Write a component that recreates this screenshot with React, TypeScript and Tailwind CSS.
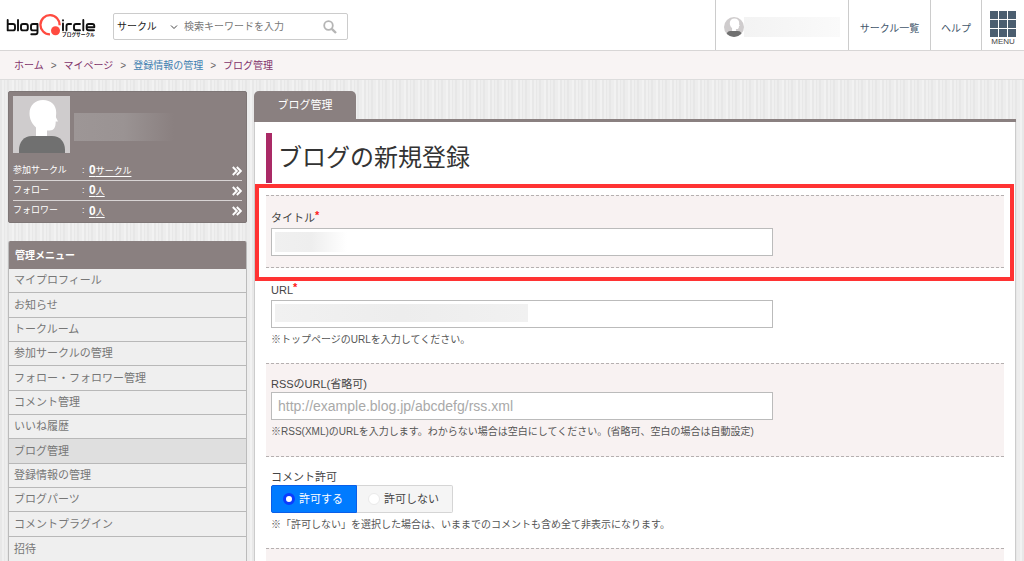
import React from "react";

const crumbs = [
  { label: "ホーム", visited: true },
  { label: "マイページ", visited: true },
  { label: "登録情報の管理", visited: false },
  { label: "ブログ管理", visited: true },
];

const stats = [
  { label: "参加サークル", unit: "サークル" },
  { label: "フォロー", unit: "人" },
  { label: "フォロワー", unit: "人" },
];

const menu = [
  "マイプロフィール",
  "お知らせ",
  "トークルーム",
  "参加サークルの管理",
  "フォロー・フォロワー管理",
  "コメント管理",
  "いいね履歴",
  "ブログ管理",
  "登録情報の管理",
  "ブログパーツ",
  "コメントプラグイン",
  "招待",
];

const stripes =
  "bg-[#eeeeee] bg-[repeating-linear-gradient(90deg,#e8e8e8_0px,#e8e8e8_2px,#f0f0f0_2px,#f0f0f0_4px,#e8e8e8_4px,#e8e8e8_5px,#eeeeee_5px,#eeeeee_7px,#e7e7e7_7px,#e7e7e7_9px,#ededed_9px,#ededed_12px,#f2f2f2_12px,#f2f2f2_14px)]";

function Logo() {
  return (
    <svg viewBox="0 0 90 24" className="h-6 w-[90px]" role="img" aria-label="blogCircle">
      <g fill="none" stroke="#111" strokeWidth="1.9" strokeLinecap="round" strokeLinejoin="round">
        <path d="M1.700 6v10.400h5.300q2 0 2-2V12q0-2-2-2H2" />
        <path d="M12 6v10.400" />
        <rect x="15" y="10" width="6.800" height="6.400" rx="2" />
        <path d="M31.500 16.400h-4.500q-2 0-2-2V12q0-2 2-2h4.500v8.200q0 2-2 2h-4.200" />
        <path d="M57 9.500v6.700M60.500 16.200V12q0-2 2-2h2.600M74 10h-4q-2 0-2 2v2.200q0 2 2 2h4M77.300 6v10.200M88 16.200h-5.300q-2 0-2-2V12q0-2 2-2h3.600q2 0 2 2v1.200h-7.200" />
        <path d="M57 6.300v.3" />
      </g>
      <path d="M44 20.400A9.600 9.600 0 1 1 53.600 11.200" fill="none" stroke="#ff4b40" strokeWidth="2.300" />
      <circle cx="49.500" cy="16.800" r="4.500" fill="#ff4b40" />
      <text x="56" y="21.800" fontSize="4.700" fontWeight="700" fill="#111">ブログサークル</text>
    </svg>
  );
}

function Silhouette({ className }: { className: string }) {
  return (
    <svg viewBox="0 0 57 57" className={className} aria-hidden="true">
      <rect width="57" height="57" fill="#cfcccd" />
      <path d="M23 42V31.500C19 28 16.500 23 16.500 17.500 16.500 9.500 22 4 30 4s13.200 5 13.200 12.500c0 2.500-.4 4-.2 5l2 4h-2.300c0 6-1.700 9-6.200 9H34V42z" fill="#fff" />
      <path d="M6 57v-3c0-8 5-14 13-14h20c8 0 13 6 13 14v3z" fill="#707070" />
    </svg>
  );
}

function Chevrons() {
  return (
    <svg viewBox="0 0 10 10" className="h-[10px] w-[10px]" fill="none" stroke="#fff" strokeWidth="1.900" aria-hidden="true">
      <path d="M.8 1l4 4-4 4M4.800 1l4 4-4 4" />
    </svg>
  );
}

function Required() {
  return <span className="align-top text-[11px] font-bold leading-[11px] text-[#ff1a1a]">*</span>;
}

const field = "block h-7 w-[502px] max-w-full border border-[#bbb] bg-white px-[6px] text-[14px] text-[#444] outline-none placeholder:text-[#a9a9a9]";
const note = "mt-1 text-[10px] leading-4 text-[#555]";
const label = "block text-[11px] leading-4";

export default function App() {
  return (
    <div lang="ja" className={`flex min-h-screen flex-col font-['Liberation_Sans','Noto_Sans_CJK_JP',sans-serif] text-[#444] ${stripes}`}>
      <header className="flex h-[51px] items-stretch border-b border-[#d8d6d6] bg-white">
        <a href="#home" className="ml-[6px] mt-[14px] block h-6">
          <Logo />
        </a>
        <form className="ml-[17px] mt-[13px] flex h-[27px] w-[235px] items-center rounded-[2px] border border-[#ccc]" onSubmit={(e) => e.preventDefault()}>
          <div className="relative flex items-center">
            <select aria-label="検索対象" className="h-6 w-[68px] appearance-none bg-transparent pl-[3px] text-[10px] text-[#222] outline-none">
              <option>サークル</option>
            </select>
            <svg viewBox="0 0 8 8" className="pointer-events-none absolute right-1 h-2 w-2" fill="none" stroke="#444" aria-hidden="true">
              <path d="M1 2.500l3 3 3-3" />
            </svg>
          </div>
          <input aria-label="検索キーワード" placeholder="検索キーワードを入力" className="h-6 min-w-0 flex-1 bg-transparent pl-[2px] text-[10px] outline-none placeholder:text-[#777]" />
          <button aria-label="検索" className="mr-[10px]">
            <svg viewBox="0 0 14 14" className="h-[14px] w-[14px]" fill="none" stroke="#b5b5b5" aria-hidden="true">
              <circle cx="5.500" cy="5.500" r="4.300" strokeWidth="1.800" />
              <path d="M8.800 8.800L13 13" strokeWidth="2.400" />
            </svg>
          </button>
        </form>
        <nav className="ml-auto flex text-[10px] text-[#42566b]">
          <a href="#me" className="flex w-[133px] items-center border-l border-[#ccc] pl-2 pt-1" aria-label="マイページ">
            <Silhouette className="h-5 w-5 rounded-full" />
            <span className="h-5 w-24 bg-linear-to-r from-[#f3f3f3] to-[#fafafa]" />
          </a>
          <a href="#circles" className="flex w-[82px] items-center justify-center border-l border-[#ccc] pt-[6px]">サークル一覧</a>
          <a href="#help" className="flex w-[51px] items-center justify-center border-l border-[#ccc] pt-[6px]">ヘルプ</a>
          <button className="flex w-[43px] flex-col items-center border-l border-[#ccc] pt-[11px]">
            <span className="grid grid-cols-3 gap-px">
              {Array.from({ length: 9 }, (_, i) => (
                <span key={i} className="h-2 w-2 bg-[#4b5e70]" />
              ))}
            </span>
            <span className="text-[8px] leading-[10px] text-[#444]">MENU</span>
          </button>
        </nav>
      </header>

      <nav aria-label="パンくず" className="flex h-[29px] items-center border-b border-[#ddd] bg-[#f8f4f4] pl-[14px] text-[10px]">
        {crumbs.map((c, i) => (
          <React.Fragment key={c.label}>
            {i > 0 && <span className="px-[7px] text-[#666]">&gt;</span>}
            <a href="#crumb" className={c.visited ? "text-[#82336b]" : "text-[#3f7fb0]"}>{c.label}</a>
          </React.Fragment>
        ))}
      </nav>

      <div className="flex flex-1 gap-[7px] px-2 pt-[11px]">
        <aside className="w-[239px] shrink-0">
          <section className="rounded-[2px] border border-[#7e7676] bg-[#8a8080] px-1 pb-px pt-1 text-white">
            <div className="flex h-[65px] items-start">
              <Silhouette className="h-[57px] w-[57px]" />
              <span className="ml-1 mt-[17px] h-7 w-[100px] bg-linear-to-r from-[#9d9696] via-[#9a9393] to-[#8a8080]" />
            </div>
            <ul>
              {stats.map((s) => (
                <li key={s.label} className="flex h-5 items-center border-b border-[#d8d4d4] text-[9px] last:border-b-0">
                  <span className="w-[69px]">{s.label}</span>
                  <span className="w-[7px]">:</span>
                  <a href="#stat" className="flex-1 leading-4 underline underline-offset-2">
                    <span className="text-[12px] font-bold">0</span>{s.unit}
                  </a>
                  <Chevrons />
                </li>
              ))}
            </ul>
          </section>
          <nav aria-label="管理メニュー" className="mt-[18px] overflow-hidden rounded-t-[2px] border-x border-[#bbb]">
            <h2 className="flex h-7 items-center bg-[#8a8080] pl-[6px] text-[10px] font-bold text-white">管理メニュー</h2>
            <ul className="grid h-[292px] auto-rows-fr bg-[#efefef] text-[11px] text-[#777]">
              {menu.map((m) => (
                <li key={m} className="border-b border-[#b8b8b8] last:border-b-0">
                  <a href="#menu" aria-current={m === "ブログ管理" ? "page" : undefined} className="flex h-full items-center pl-[5px] aria-[current=page]:bg-[#dfdfdf]">{m}</a>
                </li>
              ))}
            </ul>
          </nav>
        </aside>

        <main className="flex min-w-0 flex-1 flex-col">
          <div className="flex border-b-[3px] border-[#8a8080]">
            <a href="#tab" className="flex h-7 w-[102px] items-center justify-center rounded-t-[5px] bg-[#8a8080] text-[11px] text-white">ブログ管理</a>
          </div>
          <div className="relative flex flex-1 flex-col border-x border-[#ccc] bg-white px-[11px] pt-[11px]">
            <h1 className="flex h-[50px] items-center border-l-[6px] border-[#aa2a66] pl-[6px] text-[24px] text-[#333]">ブログの新規登録</h1>
            <form className="mt-3 flex flex-1 flex-col">
              <div className="h-[73px] border-y border-dashed border-[#b5b0b0] bg-[#f8f2f2] pl-[5px] pt-[14px]">
                <label htmlFor="title" className={label}>タイトル<Required /></label>
                <div className="relative mt-[2px]">
                  <input id="title" className={field} />
                  <span className="pointer-events-none absolute left-1 top-1 h-5 w-[72px] bg-linear-to-r from-[#f0f0f0] via-[#eeeeee] to-white" />
                </div>
              </div>
              <div className="h-[95px] pl-[5px] pt-[14px]">
                <label htmlFor="url" className={label}>URL<Required /></label>
                <div className="relative mt-[2px]">
                  <input id="url" className={field} />
                  <span className="pointer-events-none absolute left-1 top-1 h-[18px] w-[253px] bg-linear-to-r from-[#f1f1f1] via-[#ededed] to-[#f1f1f1]" />
                </div>
                <p className={note}>※トップページのURLを入力してください。</p>
              </div>
              <div className="h-[94px] border-y border-dashed border-[#b5b0b0] bg-[#f8f2f2] pl-[5px] pt-3">
                <label htmlFor="rss" className={label}>RSSのURL(省略可)</label>
                <input id="rss" placeholder="http://example.blog.jp/abcdefg/rss.xml" className={field} />
                <p className={note}>※RSS(XML)のURLを入力します。わからない場合は空白にしてください。(省略可、空白の場合は自動設定)</p>
              </div>
              <fieldset className="h-[91px] pl-[5px] pt-3">
                <legend className="float-left w-full text-[11px] leading-4">コメント許可</legend>
                <div className="clear-both flex h-7 text-[11px]">
                  <label className="flex w-[86px] items-center rounded-l-[2px] border border-[#0b5fe8] bg-[#007bff] pl-[11px] text-white">
                    <input type="radio" name="comment" defaultChecked className="mr-1 h-3 w-3 appearance-none rounded-full border-[3px] border-[#0a3cff] bg-white" />
                    許可する
                  </label>
                  <label className="flex w-24 items-center rounded-r-[2px] border border-l-0 border-[#d5d5d5] bg-[#f5f5f5] pl-[11px]">
                    <input type="radio" name="comment" className="mr-1 h-3 w-3 appearance-none rounded-full border border-[#eaeaea] bg-white" />
                    許可しない
                  </label>
                </div>
                <p className={note}>※「許可しない」を選択した場合は、いままでのコメントも含め全て非表示になります。</p>
              </fieldset>
              <div className="flex-1 border-t border-dashed border-[#b5b0b0] bg-[#f8f2f2]" />
            </form>
            <div className="pointer-events-none absolute left-0 right-px top-[62px] h-[97px] border-4 border-[#ff3333]" />
          </div>
        </main>
      </div>
    </div>
  );
}
